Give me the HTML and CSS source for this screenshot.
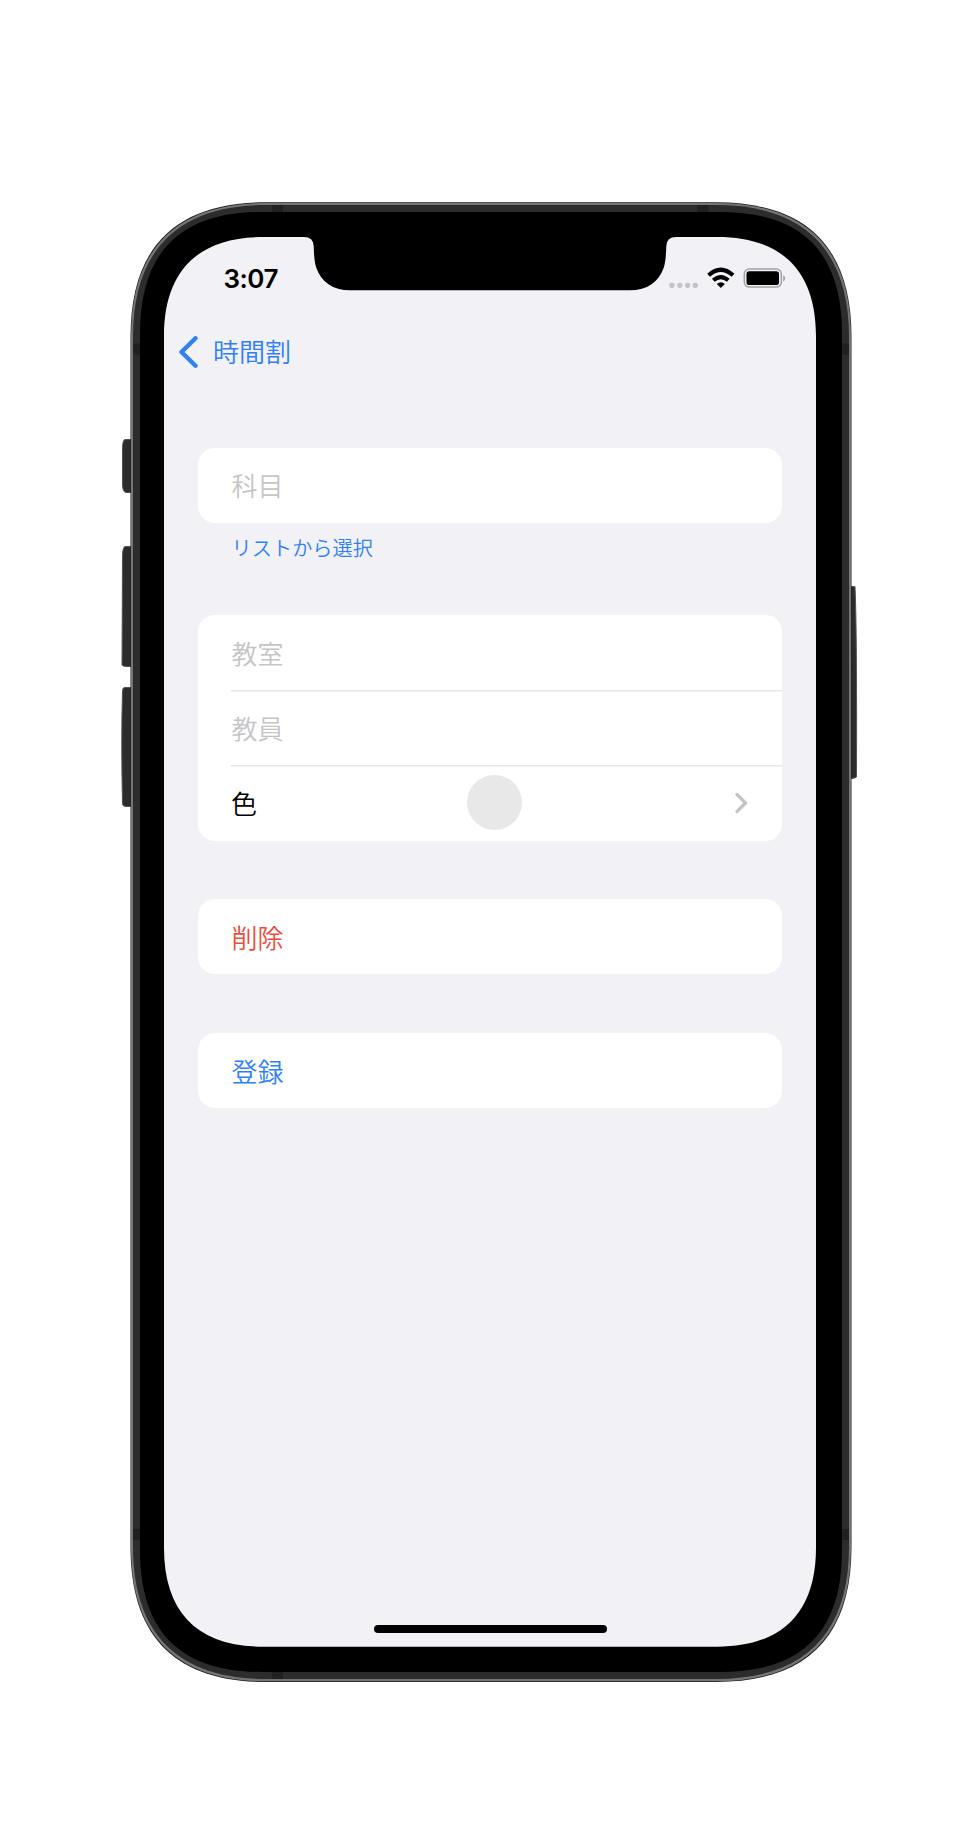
FILE: index.html
```html
<!DOCTYPE html>
<html lang="ja">
<head>
<meta charset="utf-8">
<title>時間割</title>
<link rel="stylesheet" href="styles.css">
</head>
<body>
<main class="phone">
  <svg class="frame" width="740" height="1482" viewBox="120 201 740 1482" aria-hidden="true">
    <g fill="#2c2c2c" stroke="#555" stroke-width="1">
      <path d="M132 439.500H125Q122.500 440 122.500 449V484Q122.500 492 126 492.500H132Z"/>
      <path d="M132 546.500H125Q122.500 547 122.500 558L122 665Q123 666.500 127 666.500H132Z"/>
      <path d="M132 687.500H124Q122.500 688 122.500 692Q121 740 122.500 804Q123 806.500 126 806.500H132Z"/>
      <path d="M850 586.500H855Q857 630 856.500 777Q855 778.500 850 778.500Z"/>
    </g>
    <path fill="#1c1c1c" d="M130.500 337C130.500 247 175.500 202.300 266 202.300H716C806.500 202.300 851.500 247 851.500 337V1547C851.500 1637 806.500 1682 716 1682H266C175.500 1682 130.500 1637 130.500 1547Z"/>
    <path fill="#747676" d="M131 337C131 248 176.500 203 266 203H716C805.500 203 851 248 851 337V1547C851 1636 805.500 1681.300 716 1681.300H266C176.500 1681.300 131 1636 131 1547Z"/>
    <path fill="#2c2c2c" d="M133 337C133 250 178 205 266 205H716C804 205 849 250 849 337V1547C849 1634 804 1679 716 1679H266C178 1679 133 1634 133 1547Z"/>
    <path fill="#202020" d="M272 205h11v8h-11zM697.500 205h11v8h-11zM272 1671h11v8h-11zM133 343.500h8v11h-8zM841 343.500h8v11h-8zM133 1529h8v11h-8zM841 1529h8v11h-8z"/>
    <path d="M140 334C140 252 180 212 262 212H720C802 212 842 252 842 334V1550C842 1632 802 1672 720 1672H262C180 1672 140 1632 140 1550Z"/>
    <path fill="#f2f1f6" d="M164 336C164 271 198 237 263 237H304Q313.300 237 313.700 246C314 256 314.500 261 316 267C321 282 333 290.300 350 290.300H630C647 290.300 659 282 664 267C665.500 261 666 256 666.300 246Q666.700 237 676 237H717C782 237 816 271 816 336V1547.700C816 1612.700 782 1646.700 717 1646.700H263C198 1646.700 164 1612.700 164 1547.700Z"/>
  </svg>

  <div class="screen">
    <header class="status">
      <span class="time">3:07</span>
      <svg class="indicators" width="118" height="24" viewBox="668 266 118 24" aria-hidden="true">
        <g fill="#c4c4c8">
          <rect x="669.300" y="282.700" width="5.200" height="5.200" rx="1.800"/>
          <rect x="677.200" y="282.700" width="5.200" height="5.200" rx="1.800"/>
          <rect x="685" y="282.700" width="5.200" height="5.200" rx="1.800"/>
          <rect x="692.700" y="282.700" width="5.200" height="5.200" rx="1.800"/>
        </g>
        <g fill="none" stroke="#000" stroke-width="4.100">
          <path d="M708.600 275.200Q720.800 264.300 733 275.200"/>
          <path d="M713.300 280.300Q720.800 273.800 728.300 280.300"/>
        </g>
        <path d="M716.800 284Q720.800 280.700 724.800 284L720.800 288Z"/>
        <rect x="744.300" y="269.100" width="37" height="18" rx="5" fill="none" stroke="#a2a2a6" stroke-width="1.500"/>
        <rect x="746.500" y="271.300" width="32.500" height="13.800" rx="2.800"/>
        <path fill="#a2a2a6" d="M783.200 275.200Q785.200 276 785.200 278.300T783.200 281.400Z"/>
      </svg>
    </header>

    <nav class="nav">
      <svg width="21" height="33" viewBox="0 0 21 33" aria-hidden="true"><path d="M17.500 2.300 3.500 16 17.500 29.700" fill="none" stroke="#2f80f6" stroke-width="4.400" stroke-linecap="round" stroke-linejoin="round"/></svg>
      <span>時間割</span>
    </nav>

    <div class="form">
      <section class="card"><div class="row hint">科目</div></section>
      <div class="caption">リストから選択</div>
      <section class="card details">
        <div class="row hint">教室</div>
        <div class="row hint">教員</div>
        <div class="row color">
          <span>色</span>
          <i class="swatch"></i>
          <svg width="13" height="22" viewBox="0 0 13 22" aria-hidden="true"><path d="M2 2.500 10.500 11 2 19.500" fill="none" stroke="#c4c4c6" stroke-width="3.200" stroke-linecap="round" stroke-linejoin="round"/></svg>
        </div>
      </section>
      <section class="card action"><div class="row delete">削除</div></section>
      <section class="card action"><div class="row submit">登録</div></section>
    </div>

    <div class="home"></div>
  </div>
</main>
</body>
</html>
```

FILE: styles.css
```css
* { box-sizing: border-box; }

body {
  margin: 0;
  background: #fff;
  color: #000;
  font-family: "Noto Sans CJK JP", sans-serif;
  font-size: 26px;
  font-weight: 350;
}

.phone {
  display: grid;
  width: 740px;
  height: 1832px;
  margin-left: 120px;
  padding-top: 201px;
  align-content: start;
}

.frame,
.screen { grid-area: 1 / 1; }

.frame { display: block; }

.screen {
  display: flex;
  flex-direction: column;
  width: 652px;
  height: 1410px;
  margin: 36px 0 0 44px;
}

.status {
  display: flex;
  align-items: center;
  justify-content: space-between;
  height: 53px;
  margin-top: 14px;
  padding: 0 30px 0 59.500px;
}

.time {
  padding-top: 2px;
  font: 600 26px/32px Inter, sans-serif;
  letter-spacing: -0.500px;
}

.nav {
  display: flex;
  align-items: center;
  gap: 14px;
  height: 40px;
  margin-top: 28px;
  padding-left: 14px;
  color: #2f80f6;
}

.nav span { padding-bottom: 3px; }

.form {
  width: 584.600px;
  margin: 75.500px 0 0 33.600px;
}

.card {
  overflow: hidden;
  border-radius: 17px;
  background: #fff;
}

.row {
  display: flex;
  align-items: center;
  height: 75px;
  padding: 0 34px 1px;
}

.row + .row {
  background: linear-gradient(#e6e6e8, #e6e6e8) 33px 0 / 100% 1.500px no-repeat;
}

.hint { color: #c5c5c6; }

.caption {
  height: 92.500px;
  padding: 10.500px 34px 0;
  color: #2f80f6;
  font-size: 20.200px;
  line-height: 30px;
}

.details { height: 226px; }

.color { font-weight: 350; }

.color span { margin-left: -0.500px; }

.swatch {
  width: 55.500px;
  height: 55.500px;
  margin: 1px 0 0 209.700px;
  border-radius: 50%;
  background: #e8e8e8;
}

.color svg {
  margin: 1px 0 0 auto;
}

.action { margin-top: 58px; }

.action + .action { margin-top: 59px; }

.delete { color: #eb4e3d; }

.submit { color: #2f80f6; }

.home {
  width: 233px;
  height: 8.500px;
  margin: auto auto 13.700px;
  border-radius: 5px;
  background: #000;
}
```
